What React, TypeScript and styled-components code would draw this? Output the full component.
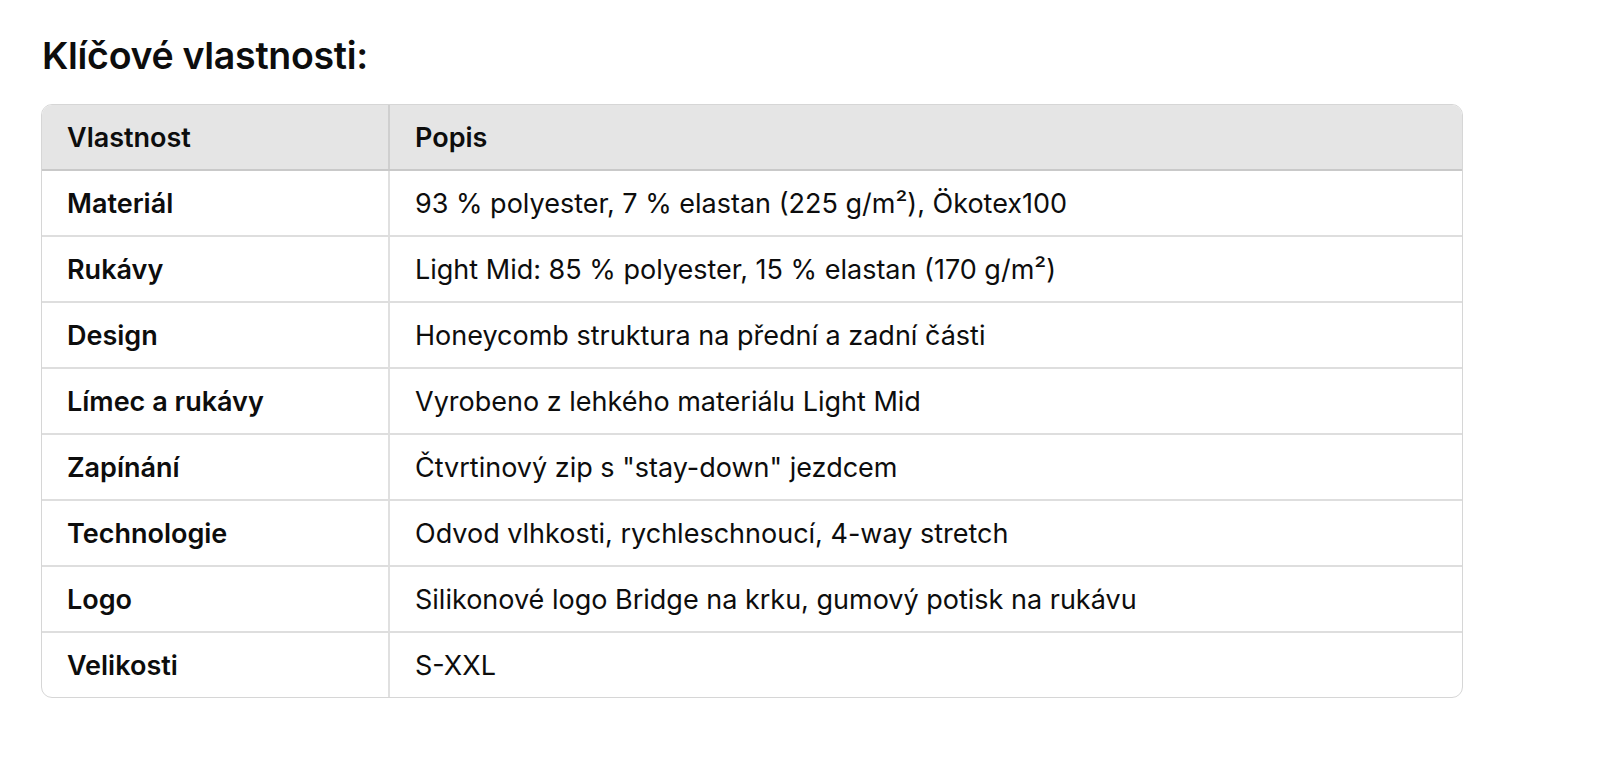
import React from "react";
import styled, { createGlobalStyle } from "styled-components";

const Global = createGlobalStyle`
  html, body { margin: 0; padding: 0; background: #ffffff; }
  body { font-family: Inter, "Noto Sans", "Liberation Sans", sans-serif; color: #0d0d0d; }
`;

const Page = styled.div`
  padding: 34px 137px 0 41px;
`;

const Heading = styled.h3`
  margin: 0 0 26px 1px;
  font-size: 37.5px;
  line-height: 44px;
  font-weight: 600;
  letter-spacing: -0.3px;
  color: #0d0d0d;
`;

const TableWrap = styled.div`
  border: 1.5px solid #d6d6d6;
  border-radius: 11px;
  overflow: hidden;
`;

const Table = styled.table`
  width: 100%;
  border-collapse: collapse;
  font-size: 27px;
`;

const HeadCell = styled.th<{ $first?: boolean }>`
  background: #e5e5e5;
  text-align: left;
  font-weight: 600;
  height: 64px;
  padding: 0 25px;
  border-bottom: 2px solid #c9c9c9;
  border-left: ${(p) => (p.$first ? "none" : "2px solid #cfcfcf")};
  width: ${(p) => (p.$first ? "296px" : "auto")};
`;

const Cell = styled.td<{ $first?: boolean; $last?: boolean }>`
  height: 64px;
  padding: 0 25px;
  font-weight: ${(p) => (p.$first ? 600 : 400)};
  border-bottom: ${(p) => (p.$last ? "none" : "2px solid #dedede")};
  border-left: ${(p) => (p.$first ? "none" : "2px solid #e0e0e0")};
`;

const rows: [string, string][] = [
  ["Materiál", "93 % polyester, 7 % elastan (225 g/m²), Ökotex100"],
  ["Rukávy", "Light Mid: 85 % polyester, 15 % elastan (170 g/m²)"],
  ["Design", "Honeycomb struktura na přední a zadní části"],
  ["Límec a rukávy", "Vyrobeno z lehkého materiálu Light Mid"],
  ["Zapínání", "Čtvrtinový zip s \"stay-down\" jezdcem"],
  ["Technologie", "Odvod vlhkosti, rychleschnoucí, 4-way stretch"],
  ["Logo", "Silikonové logo Bridge na krku, gumový potisk na rukávu"],
  ["Velikosti", "S-XXL"],
];

export default function App() {
  return (
    <Page>
      <Global />
      <Heading>Klíčové vlastnosti:</Heading>
      <TableWrap>
        <Table>
          <thead>
            <tr>
              <HeadCell $first>Vlastnost</HeadCell>
              <HeadCell>Popis</HeadCell>
            </tr>
          </thead>
          <tbody>
            {rows.map(([k, v], i) => (
              <tr key={k}>
                <Cell $first $last={i === rows.length - 1}>{k}</Cell>
                <Cell $last={i === rows.length - 1}>{v}</Cell>
              </tr>
            ))}
          </tbody>
        </Table>
      </TableWrap>
    </Page>
  );
}
